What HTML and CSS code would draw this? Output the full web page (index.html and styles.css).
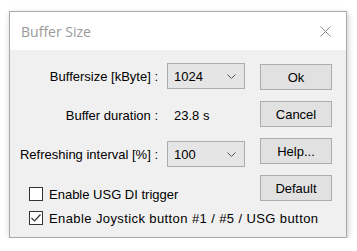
FILE: index.html
```html
<!DOCTYPE html>
<html>
<head>
<meta charset="utf-8">
<link rel="stylesheet" href="styles.css">
</head>
<body>
<div class="window">
  <div class="titlebar">
    <span class="title">Buffer Size</span>
    <span class="close">
      <svg width="11" height="11" viewBox="0 0 11 11"><path d="M0.5 0.5 L10.5 10.5 M10.5 0.5 L0.5 10.5" stroke="#8a8a8a" stroke-width="1" fill="none"/></svg>
    </span>
  </div>
  <div class="body">
    <div class="left">
      <div class="form">
        <div class="label">Buffersize [kByte] :</div>
        <div class="combo"><span>1024</span><svg width="9" height="5" viewBox="0 0 9 5"><polyline points="0.5,0.5 4.5,4.5 8.5,0.5" stroke="#555" fill="none"/></svg></div>
        <div class="label">Buffer duration :</div>
        <div class="value">23.8 s</div>
        <div class="label">Refreshing interval [%] :</div>
        <div class="combo"><span>100</span><svg width="9" height="5" viewBox="0 0 9 5"><polyline points="0.5,0.5 4.5,4.5 8.5,0.5" stroke="#555" fill="none"/></svg></div>
      </div>
      <div class="checks">
        <div class="check"><span class="box"></span><span>Enable USG DI trigger</span></div>
        <div class="check"><span class="box"><svg width="12" height="12" viewBox="0 0 12 12"><polyline points="1.5,6 4.5,9 10.5,2.5" stroke="#333" stroke-width="1.2" fill="none"/></svg></span><span class="wide">Enable Joystick button #1 / #5 / USG button</span></div>
      </div>
    </div>
    <div class="buttons">
      <div class="btn">Ok</div>
      <div class="btn">Cancel</div>
      <div class="btn">Help...</div>
      <div class="btn btn-default">Default</div>
    </div>
  </div>
</div>
</body>
</html>
```
FILE: styles.css
```css
html, body {
  margin: 0;
  padding: 0;
  background: #ffffff;
}
.window {
  margin: 11px 0 0 9px;
  width: 336px;
  border: 1px solid #a9a9a9;
  box-shadow: 1px 2px 6px rgba(0,0,0,0.22);
  background: #f0f0f0;
}
.titlebar {
  height: 38px;
  background: #ffffff;
  display: flex;
  align-items: center;
  justify-content: space-between;
  padding-left: 11px;
}
.title {
  font-family: "Open Sans", sans-serif;
  font-size: 14px;
  color: #999999;
}
.close {
  width: 42px;
  display: flex;
  justify-content: center;
  align-items: center;
}
.body {
  height: 187px;
  box-sizing: border-box;
  display: flex;
  padding: 13px 14px 0 0;
  font-family: "Liberation Sans", Arial, sans-serif;
  font-size: 13px;
  color: #000;
}
.left {
  flex: 1;
  min-width: 0;
  display: flex;
  flex-direction: column;
}
.form {
  display: grid;
  grid-template-columns: 148px 78px;
  grid-auto-rows: 26px;
  column-gap: 9px;
  row-gap: 13px;
}
.label {
  text-align: right;
  align-self: center;
  white-space: nowrap;
}
.value {
  align-self: center;
  padding-left: 7px;
}
.combo {
  box-sizing: border-box;
  border: 1px solid #adadad;
  background: #e5e5e5;
  display: flex;
  align-items: center;
  justify-content: space-between;
  padding: 0 8px 0 6px;
}
.checks {
  margin-top: 15px;
  padding-left: 19px;
  display: flex;
  flex-direction: column;
}
.check {
  height: 24px;
  display: flex;
  align-items: center;
  gap: 6px;
  white-space: nowrap;
}
.wide {
  letter-spacing: 0.4px;
}
.box {
  width: 14px;
  height: 14px;
  box-sizing: border-box;
  border: 1px solid #333;
  background: #fff;
  display: flex;
  align-items: center;
  justify-content: center;
  flex: none;
}
.buttons {
  width: 72px;
  display: flex;
  flex-direction: column;
  gap: 11px;
  padding-top: 1px;
}
.btn {
  height: 26px;
  box-sizing: border-box;
  border: 1px solid #adadad;
  background: #e1e1e1;
  display: flex;
  align-items: center;
  justify-content: center;
}
```
